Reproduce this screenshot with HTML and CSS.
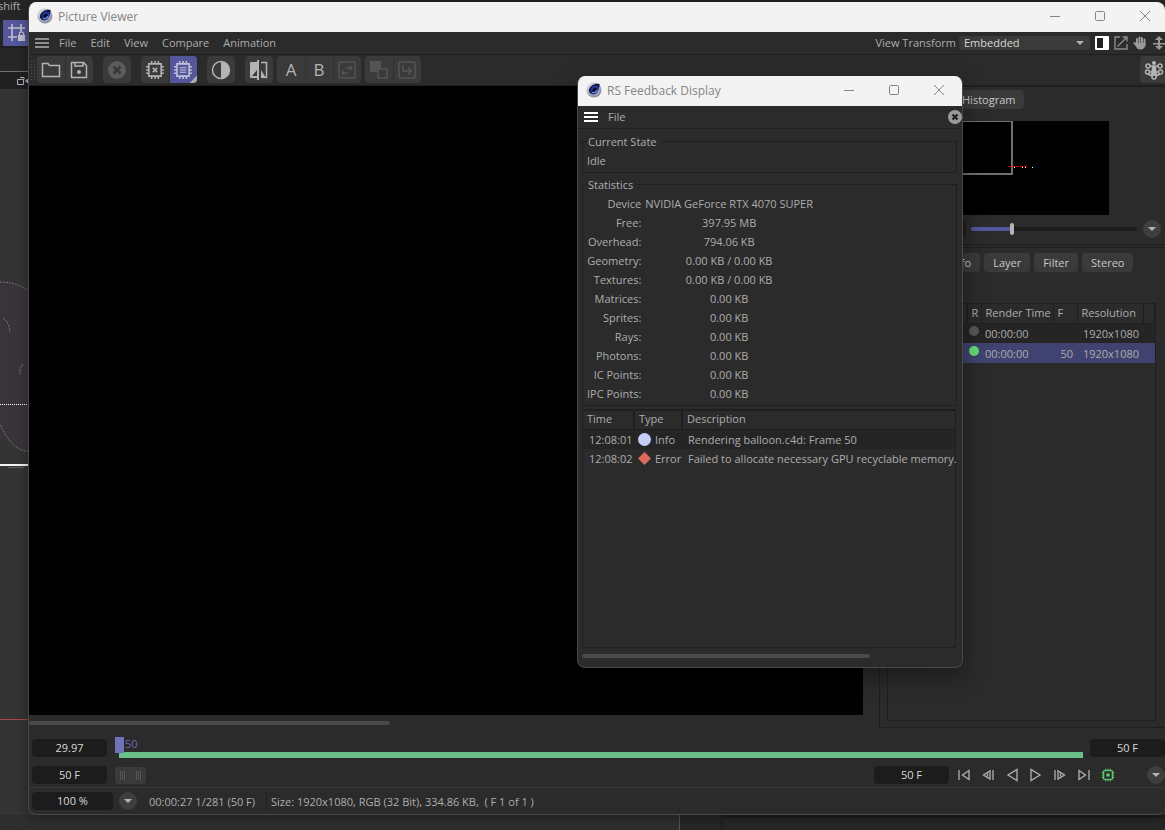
FILE: index.html
```
<!DOCTYPE html>
<html lang="en">

<head>
    <meta charset="UTF-8">
    <title>Picture Viewer</title>
    <link rel="stylesheet" href="styles.css">
</head>

<body>
    <!-- shared icons -->
    <svg class="defs" aria-hidden="true">
        <defs>
            <radialGradient id="ball" cx="40%" cy="35%" r="75%">
                <stop offset="0" stop-color="#ffffff" />
                <stop offset="1" stop-color="#77788c" />
            </radialGradient>
            <radialGradient id="lens" cx="60%" cy="60%" r="60%">
                <stop offset="0" stop-color="#6b8ce8" />
                <stop offset="0.5" stop-color="#26379c" />
                <stop offset="1" stop-color="#080c2c" />
            </radialGradient>
        </defs>
        <symbol id="logo" viewBox="0 0 16 16">
            <circle cx="8" cy="8" r="7.5" fill="url(#ball)" />
            <path d="M13.500 2C10 .8 4 3 3 7.500c-.6 3.500 2.500 5.500 5.500 4.700 3.500-1 5-4.700 5-10.200z" fill="url(#lens)" />
            <ellipse cx="8.600" cy="7.600" rx="2.600" ry="1.700" transform="rotate(-35 8.600 7.600)" fill="#050a24" />
            <path d="M6 10.500c2 .8 4-.2 5-2.500" stroke="#7f9bf0" fill="none" />
        </symbol>
        <symbol id="chip" viewBox="0 0 18 18">
            <path d="M3.500 3.500h11v11h-11zM6 1v2.500M9 1v2.500M12 1v2.500M6 14.500V17M9 14.500V17M12 14.500V17M1 6h2.500M1 9h2.500M1 12h2.500M14.500 6H17M14.500 9H17M14.500 12H17" fill="none" stroke="currentColor" stroke-width="1.400" />
        </symbol>
        <symbol id="min" viewBox="0 0 10 10"><path d="M0 5.500h10" stroke="currentColor" /></symbol>
        <symbol id="max" viewBox="0 0 10 10"><rect x=".5" y=".5" width="9" height="9" rx="1" fill="none" stroke="currentColor" /></symbol>
        <symbol id="close" viewBox="0 0 10 10"><path d="M0 0l10 10M10 0L0 10" stroke="currentColor" /></symbol>
        <symbol id="bars" viewBox="0 0 14 10"><path d="M0 1h14M0 5h14M0 9h14" stroke="currentColor" stroke-width="2" /></symbol>
    </svg>

    <!-- main application behind -->
    <div class="app">
        <div class="app-menu">shift</div>
        <div class="app-tools">
            <button class="snap" aria-label="Snap">
                <svg width="20" height="20" viewBox="0 0 20 20" fill="none" stroke="#bfc0cc" stroke-width="1.600">
                    <path d="M1 5h17M1 14h9M5 1v17M14 1v8" />
                    <rect x="11" y="12" width="7" height="6" fill="#bfc0cc" stroke="none" />
                    <path d="M12.500 12v-2q2-2 4 0v2" stroke-width="1.200" />
                </svg>
            </button>
        </div>
        <div class="app-row"></div>
        <div class="app-camera">
            <svg width="13" height="10" viewBox="0 0 13 10" fill="none" stroke="#aeb4c4">
                <path d="M.5 3.500h6v5h-6zM3 1.500h4v2" />
                <path d="M12 2.500v5L8.500 5z" fill="#aeb4c4" />
            </svg>
        </div>
        <div class="app-view">
            <svg width="29" height="741" viewBox="0 89 29 741">
                <path d="M0 282q16 0 29 9v160q-9 1-18-9-7-8-11-18z" fill="#393439" />
                <path d="M0 282q16 0 29 9M29 451q-9 1-18-9-7-8-11-18" fill="none" stroke="#757575" stroke-dasharray="2 1" />
                <path d="M3 318q6 4 7 14M23 364q-4 5-3 10" fill="none" stroke="#7c7c7c" stroke-dasharray="2 1" />
                <path d="M0 404.500h29" stroke="#fff" stroke-dasharray="1 1" />
                <path d="M0 465h29" stroke="#f4f4f4" stroke-width="2" />
                <path d="M8 467.500h16" stroke="#606060" />
                <path d="M0 719.500h29" stroke="#a34a4a" />
            </svg>
        </div>
        <div class="app-foot">
            <div class="foot-view"></div>
            <div class="foot-side"></div>
        </div>
    </div>

    <!-- picture viewer -->
    <main class="window viewer">
        <header class="titlebar">
            <svg class="logo"><use href="#logo" /></svg>
            <h1>Picture Viewer</h1>
            <div class="win-buttons">
                <button aria-label="Minimize"><svg><use href="#min" /></svg></button>
                <button aria-label="Maximize"><svg><use href="#max" /></svg></button>
                <button aria-label="Close"><svg><use href="#close" /></svg></button>
            </div>
        </header>

        <nav class="menubar">
            <button class="burger" aria-label="Menu"><svg><use href="#bars" /></svg></button>
            <button class="item">File</button>
            <button class="item">Edit</button>
            <button class="item">View</button>
            <button class="item">Compare</button>
            <button class="item">Animation</button>
            <div class="menu-right">
                <label for="transform">View Transform</label>
                <select id="transform">
                    <option>Embedded</option>
                </select>
                <button aria-label="Side panel">
                    <svg width="14" height="14" viewBox="0 0 14 14"><rect width="14" height="14" rx="1" fill="#fff" /><path d="M2 2h6v10H2z" fill="#222" /></svg>
                </button>
                <button aria-label="Open in window">
                    <svg width="14" height="14" viewBox="0 0 14 14" fill="none" stroke="#8c8c8c" stroke-width="1.400"><path d="M6 1H1v12h12V8M3.500 10.500L13 1M8.500 1H13v4.500" /></svg>
                </button>
                <button aria-label="Pan">
                    <svg width="14" height="14" viewBox="0 0 14 14" fill="none" stroke="#9a9a9a" stroke-width="2" stroke-linecap="round"><path d="M4 8V3M6.500 7V1.500M9 7V2M11.500 8V3.500M1.500 7L4 10" /><path d="M4 8h7.500v1.500q-1 3-4 3T4 9.500z" fill="#9a9a9a" /></svg>
                </button>
                <button aria-label="Zoom">
                    <svg width="14" height="14" viewBox="0 0 14 14" fill="#9a9a9a"><path d="M7 0l4 4H8v3h5v1.500H8V10h3l-4 4-4-4h3V8.500H1V7h5V4H3z" /></svg>
                </button>
            </div>
        </nav>

        <div class="toolbar">
            <span class="grip"></span>
            <div class="group">
                <button aria-label="Open"><svg viewBox="0 0 20 20"><path d="M1.500 16.500v-13h5.500l1.500 2h10v11z" /></svg></button>
                <button aria-label="Save"><svg viewBox="0 0 20 20"><path d="M2.500 2.500h12l3 3v12h-15zM6 3v3h8V3" /><circle cx="10" cy="12" r="2" class="fill" /></svg></button>
            </div>
            <div class="group">
                <button aria-label="Stop" disabled><svg viewBox="0 0 20 20"><circle cx="10" cy="10" r="9" fill="#5c5c5c" stroke="none" /><path d="M6.500 6.500l7 7M13.500 6.500l-7 7" stroke="#393939" stroke-width="3" /></svg></button>
            </div>
            <div class="group">
                <button aria-label="Clear cache"><svg viewBox="0 0 18 18"><use href="#chip" /><path d="M7 7l4 4M11 7l-4 4" /></svg></button>
                <button aria-label="Cache" class="on"><svg viewBox="0 0 18 18"><use href="#chip" /><path d="M6 7h6M6 9h6M6 11h6" stroke-width="1" /></svg></button>
            </div>
            <div class="group">
                <button aria-label="Contrast"><svg viewBox="0 0 20 20"><circle cx="10" cy="10" r="8.500" /><path d="M10 1.500a8.500 8.500 0 0 1 0 17z" class="fill" /></svg></button>
            </div>
            <div class="group tight">
                <button aria-label="Compare"><svg viewBox="0 0 20 20"><path d="M1 3q0-1 1-1h6V0h2v20H8v-2H2q-1 0-1-1zM8 10l-5 6h5z" fill-rule="evenodd" class="fill" /><path d="M12 2.500h5.500v15H16" /><path d="M12 10l5 8h-5z" class="fill" /></svg></button>
            </div>
            <div class="group tight">
                <button class="letter">A</button>
                <button class="letter">B</button>
                <button aria-label="Swap" disabled><svg viewBox="0 0 20 20"><rect x="2" y="2" width="16" height="16" rx="1" /><path d="M9 8h6M13 6l2 2-2 2M11 13H5M7 11l-2 2 2 2" /></svg></button>
            </div>
            <div class="group">
                <button aria-label="Layers" disabled><svg viewBox="0 0 20 20"><path d="M1 1h11v11H1z" class="fill" /><path d="M9 9h9v9H9z" fill="#3a3a3a" /></svg></button>
                <button aria-label="Send" disabled><svg viewBox="0 0 20 20"><rect x="2" y="2" width="16" height="16" rx="1" /><path d="M6 5v6h8M11 7.500l3.500 3.500-3.500 3.500" /></svg></button>
            </div>
            <div class="group last">
                <button aria-label="Simulation">
                    <svg viewBox="0 0 20 20"><path d="M8 6h4l1 9h-6z" class="fill" /><circle cx="10" cy="3" r="2" class="fill" /><circle cx="4" cy="6" r="2" /><circle cx="16" cy="6" r="2" /><circle cx="3.500" cy="12" r="2" /><circle cx="16.500" cy="12" r="2" /><circle cx="10" cy="17" r="2" /><path d="M6 6h8M5 12h10M8 16l-4-2M12 16l4-2" /></svg>
                </button>
            </div>
        </div>

        <div class="content">
            <section class="stage">
                <div class="canvas"></div>
                <div class="scroll"></div>
            </section>

            <aside class="side">
                <div class="tabs top-tabs">
                    <button>Histogram</button>
                </div>
                <div class="navigator">
                    <div class="frame"></div>
                    <svg class="marks" width="26" height="4" viewBox="0 0 26 4"><path d="M0 1.500h20" stroke="#e00000" stroke-dasharray="3 1" /><path d="M6 2.500h1M14 2.500h1M17 2.500h1M24 2.500h1" stroke="#fff" /></svg>
                </div>
                <div class="zoom-row">
                    <span class="zoom-value"></span>
                    <input type="range" min="0" max="100" value="24" aria-label="Zoom">
                    <button class="round" aria-label="Zoom presets"></button>
                </div>
                <div class="tabs info-tabs">
                    <button>Info</button>
                    <button>Layer</button>
                    <button>Filter</button>
                    <button>Stereo</button>
                </div>
                <div class="history">
                    <table>
                        <thead>
                            <tr>
                                <th class="c-name"></th>
                                <th class="c-r">R</th>
                                <th class="c-time">Render Time</th>
                                <th class="c-f">F</th>
                                <th class="c-res">Resolution</th>
                                <th></th>
                            </tr>
                        </thead>
                        <tbody>
                            <tr>
                                <td></td>
                                <td class="state"><i class="dot"></i></td>
                                <td>00:00:00</td>
                                <td class="num"></td>
                                <td class="num">1920x1080</td>
                                <td></td>
                            </tr>
                            <tr class="selected">
                                <td class="num">*</td>
                                <td class="state"><i class="dot green"></i></td>
                                <td>00:00:00</td>
                                <td class="num">50</td>
                                <td class="num">1920x1080</td>
                                <td></td>
                            </tr>
                        </tbody>
                    </table>
                </div>
            </aside>
        </div>

        <section class="timeline">
            <div class="line">
                <input class="field" value="29.97" aria-label="Frame rate">
                <div class="ruler">
                    <div class="track"></div>
                    <div class="playhead"></div>
                    <span class="frame-no">50</span>
                </div>
                <input class="field" value="50 F" aria-label="Last frame">
            </div>
            <div class="line">
                <input class="field" value="50 F" aria-label="First frame">
                <div class="range"><i></i><i></i></div>
                <input class="field push" value="50 F" aria-label="Current frame">
                <div class="transport">
                    <button aria-label="First"><svg viewBox="0 0 14 14"><path d="M2 2v10M12 2.500v9L5.500 7z" /></svg></button>
                    <button aria-label="Previous frame"><svg viewBox="0 0 14 14"><path d="M12 2v10M9 3v8L2.500 7zM6.500 5.500v3" /></svg></button>
                    <button aria-label="Play backwards"><svg viewBox="0 0 14 14"><path d="M12 1.500v11L3 7z" /></svg></button>
                    <button aria-label="Play"><svg viewBox="0 0 14 14"><path d="M2 1.500v11L11 7z" /></svg></button>
                    <button aria-label="Next frame"><svg viewBox="0 0 14 14"><path d="M2 2v10M5 3v8l6.500-4zM7.500 5.500v3" /></svg></button>
                    <button aria-label="Last"><svg viewBox="0 0 14 14"><path d="M12 2v10M2 2.500v9L8.500 7z" /></svg></button>
                    <button aria-label="RAM player" class="ram"><svg viewBox="0 0 18 18"><use href="#chip" /><path d="M7 7h4v4H7z" class="fill" /></svg></button>
                </div>
                <button class="round" aria-label="Options"></button>
            </div>
        </section>

        <footer class="status">
            <input class="field wide" value="100 %" aria-label="Zoom factor">
            <button class="round" aria-label="Zoom list"></button>
            <span class="time">00:00:27 1/281 (50 F)</span>
            <span class="size">Size: 1920x1080, RGB (32 Bit), 334.86 KB,&nbsp; ( F 1 of 1 )</span>
        </footer>
    </main>

    <!-- redshift feedback -->
    <section class="window feedback">
        <header class="titlebar">
            <svg class="logo"><use href="#logo" /></svg>
            <h2>RS Feedback Display</h2>
            <div class="win-buttons">
                <button aria-label="Minimize"><svg><use href="#min" /></svg></button>
                <button aria-label="Maximize"><svg><use href="#max" /></svg></button>
                <button aria-label="Close"><svg><use href="#close" /></svg></button>
            </div>
        </header>
        <nav class="menubar">
            <button class="burger" aria-label="Menu"><svg><use href="#bars" /></svg></button>
            <button class="item">File</button>
            <button class="cancel" aria-label="Cancel">
                <svg width="14" height="14" viewBox="0 0 14 14"><circle cx="7" cy="7" r="7" fill="#999" /><path d="M4.500 4.500l5 5M9.500 4.500l-5 5" stroke="#222" stroke-width="2.400" /></svg>
            </button>
        </nav>
        <div class="panel">
            <fieldset>
                <legend>Current State</legend>
                <p>Idle</p>
            </fieldset>
            <fieldset class="stats">
                <legend>Statistics</legend>
                <table>
                    <tr><th>Device</th><td>NVIDIA GeForce RTX 4070 SUPER</td></tr>
                    <tr><th>Free:</th><td>397.95 MB</td></tr>
                    <tr><th>Overhead:</th><td>794.06 KB</td></tr>
                    <tr><th>Geometry:</th><td>0.00 KB / 0.00 KB</td></tr>
                    <tr><th>Textures:</th><td>0.00 KB / 0.00 KB</td></tr>
                    <tr><th>Matrices:</th><td>0.00 KB</td></tr>
                    <tr><th>Sprites:</th><td>0.00 KB</td></tr>
                    <tr><th>Rays:</th><td>0.00 KB</td></tr>
                    <tr><th>Photons:</th><td>0.00 KB</td></tr>
                    <tr><th>IC Points:</th><td>0.00 KB</td></tr>
                    <tr><th>IPC Points:</th><td>0.00 KB</td></tr>
                </table>
            </fieldset>
            <div class="log">
                <table>
                    <thead>
                        <tr><th class="l-time">Time</th><th class="l-type">Type</th><th>Description</th></tr>
                    </thead>
                    <tbody>
                        <tr class="odd">
                            <td>12:08:01</td>
                            <td class="type"><i class="info-dot"></i>Info</td>
                            <td>Rendering balloon.c4d: Frame 50</td>
                        </tr>
                        <tr>
                            <td>12:08:02</td>
                            <td class="type"><i class="error-dot"></i>Error</td>
                            <td>Failed to allocate necessary GPU recyclable memory.</td>
                        </tr>
                    </tbody>
                </table>
            </div>
            <div class="scroll"></div>
        </div>
    </section>
</body>

</html>
```
FILE: styles.css
```
* {
    box-sizing: border-box;
}

body {
    margin: 0;
    height: 100vh;
    min-height: 700px;
    position: relative;
    overflow: hidden;
    background: #262626;
    color: #adadad;
    font: 11px/19px "Open Sans", "Noto Sans CJK KR", sans-serif;
}

button,
input,
select {
    font: inherit;
    color: inherit;
    border: 0;
    margin: 0;
    padding: 0;
    background: none;
}

button {
    display: flex;
    align-items: center;
    justify-content: center;
}

table {
    border-collapse: collapse;
    table-layout: fixed;
    width: 100%;
}

th,
td {
    padding: 0;
    font-weight: normal;
    text-align: left;
    white-space: nowrap;
}

h1,
h2,
p {
    margin: 0;
    font-size: 12px;
    font-weight: normal;
}

.defs {
    position: absolute;
    width: 0;
    height: 0;
}

/* application behind the windows */
.app {
    height: 100%;
    display: flex;
    flex-direction: column;
}

.app-menu {
    height: 18px;
    line-height: 12px;
    text-indent: -2px;
}

.app-tools {
    height: 30px;
    padding: 2px 0 0 3px;
    border-bottom: 2px solid #1f1f1f;
}

.snap {
    width: 28px;
    height: 26px;
    background: #54579b;
}

.app-row {
    height: 24px;
    border-bottom: 1px solid #707070;
}

.app-camera {
    height: 17px;
    padding: 4px 0 0 17px;
    background: #202020;
}

.app-camera svg,
.app-view svg {
    display: block;
}

.app-view {
    flex: 1;
    min-height: 0;
    overflow: hidden;
    background: #343434;
}

.app-foot {
    height: 15px;
    display: flex;
}

.foot-view {
    width: 680px;
    background: #2e2e2e;
    border-right: 1px solid #555;
}

.foot-side {
    flex: 1;
    margin-left: 41px;
    border-left: 1px solid #1a1a1a;
    border-top: 3px solid #1e1e1e;
}

/* windows */
.window {
    position: absolute;
    display: flex;
    flex-direction: column;
    overflow: hidden;
    border-radius: 8px;
    background: #2b2b2b;
}

.viewer {
    left: 28px;
    top: 2px;
    right: 0;
    bottom: 15px;
    border: solid #4a4a4a;
    border-width: 0 0 1px 1px;
    box-shadow: 0 2px 12px rgba(0, 0, 0, 0.4);
}

.feedback {
    left: 577px;
    top: 76px;
    width: 386px;
    height: 592px;
    border: solid #4a4a4a;
    border-width: 0 1px 1px;
    box-shadow: 0 8px 24px rgba(0, 0, 0, 0.4);
}

.titlebar {
    flex: none;
    height: 30px;
    padding: 0 0 2px 8px;
    display: flex;
    align-items: center;
    gap: 5px;
    background: #f3f3f3;
    color: #858585;
}

.logo {
    width: 16px;
    height: 16px;
}

.win-buttons {
    margin-left: auto;
    display: flex;
}

.win-buttons button {
    width: 45px;
    height: 28px;
}

.viewer .win-buttons {
    margin-right: -2px;
}

.feedback .win-buttons {
    margin-right: 1px;
}

.win-buttons svg {
    width: 10px;
    height: 10px;
}

.menubar {
    flex: none;
    height: 23px;
    padding-left: 6px;
    display: flex;
    align-items: center;
    gap: 14px;
    border-bottom: 1px solid #1f1f1f;
}

.burger {
    margin-right: -4px;
    color: #8f8f8f;
}

.burger svg {
    width: 14px;
    height: 10px;
}

.item,
.menu-right label {
    padding-bottom: 2px;
}

.menu-right {
    margin-left: auto;
    display: flex;
    align-items: center;
    gap: 5px;
    margin-right: -1px;
}

.menu-right label {
    margin-right: -2px;
}

.menu-right select {
    width: 131px;
    height: 14px;
    padding-left: 5px;
    line-height: 14px;
    appearance: none;
    border-radius: 3px;
    color: #d8d8d8;
    background: #3a3a3a url("data:image/svg+xml,%3Csvg xmlns='http://www.w3.org/2000/svg' width='8' height='4'%3E%3Cpath d='M0 0h8L4 4z' fill='%23b0b0b0'/%3E%3C/svg%3E") no-repeat right 6px center;
}

/* toolbar */
.toolbar {
    flex: none;
    height: 31px;
    padding: 0 0 1px 1px;
    display: flex;
    align-items: center;
    gap: 4px;
    border-bottom: 1px solid #1f1f1f;
}

.grip {
    width: 6px;
    height: 20px;
    margin-right: -3px;
    background: radial-gradient(#555 1px, transparent 1px) 0 0 / 3px 3px;
}

.group {
    display: flex;
    margin-right: 6px;
    border-radius: 4px;
    overflow: hidden;
    background: #3a3a3a;
}

.group.tight {
    margin-right: 0;
}

.group button {
    width: 28px;
    height: 27px;
    color: #b4b4b4;
}

.group button + button {
    box-shadow: inset 1px 0 #313131;
}

.group button:disabled {
    color: #545454;
}

.group svg {
    width: 20px;
    height: 20px;
    fill: none;
    stroke: currentColor;
    stroke-width: 1.5px;
}

.group .fill,
.transport .fill {
    fill: currentColor;
    stroke: none;
}

.group .letter {
    font-size: 17px;
}

.group .on {
    color: #c0c1d8;
    background: linear-gradient(135deg, transparent 87%, #aaa 87%) #54579b;
}

.group.last {
    margin: 0 -3px 0 auto;
}

/* picture and side panel */
.content {
    flex: 1;
    min-height: 0;
    display: flex;
}

.stage {
    flex: 1;
    display: flex;
    flex-direction: column;
    gap: 6px;
}

.canvas {
    flex: 1;
    background: #000;
}

.scroll {
    width: 361px;
    height: 4px;
    border-radius: 2px;
    background: #4a4a4a;
}

.stage .scroll {
    margin-bottom: 3px;
}

.side {
    width: 286px;
    margin-left: 16px;
    display: flex;
    flex-direction: column;
    border: solid #1f1f1f;
    border-width: 1px 0 1px 1px;
}

.tabs {
    display: flex;
    gap: 4px;
}

.tabs button {
    height: 19px;
    padding: 0 9px;
    border-radius: 4px;
    background: #3a3a3a;
    color: #c8c8c8;
}

.top-tabs {
    padding: 3px 0 12px 73px;
}

.navigator {
    height: 94px;
    width: 220px;
    margin-left: 9px;
    position: relative;
    background: #000;
}

.frame {
    width: 124px;
    height: 54px;
    border: 2px solid #707070;
    border-width: 1px 2px 2px 1px;
}

.marks {
    position: absolute;
    left: 119px;
    top: 44px;
}

.zoom-row {
    height: 30px;
    padding: 2px 4px 3px 8px;
    display: flex;
    align-items: center;
    border-bottom: 1px solid #1f1f1f;
}

.zoom-value {
    width: 78px;
    height: 18px;
    border-radius: 4px;
    background: #1d1d1d;
}

.zoom-row input {
    flex: 1;
    height: 12px;
    margin: 0 6px 0 5px;
    appearance: none;
}

.zoom-row input::-webkit-slider-runnable-track {
    height: 4px;
    border-radius: 2px;
    background: linear-gradient(90deg, #54579b 24%, #1d1d1d 24%);
}

.zoom-row input::-webkit-slider-thumb {
    appearance: none;
    width: 4px;
    height: 12px;
    margin-top: -4px;
    border-radius: 2px;
    background: #b4b4b4;
}

.round {
    flex: none;
    width: 18px;
    height: 18px;
    border-radius: 50%;
    background: #3e3e3e;
}

.round::after {
    content: "";
    border: 4px solid transparent;
    border-top-color: #b4b4b4;
    border-bottom: 0;
}

.info-tabs {
    margin-top: 2px;
    padding: 5px 0 31px 62px;
    border-top: 1px solid #1f1f1f;
}

.history {
    flex: 1;
    margin: 0 9px 6px 7px;
    border: 1px solid #1f1f1f;
}

.history th {
    height: 19px;
    line-height: 18px;
    padding-left: 4px;
    border-right: 1px solid #1f1f1f;
    border-bottom: 1px solid #1f1f1f;
}

.history td {
    height: 20px;
    padding-left: 4px;
    background: #252525;
}

.history .selected td {
    background: #40436f;
}

.history .num {
    padding: 0 4px 0 0;
    text-align: right;
}

.history td.state {
    padding: 0;
}

.c-name {
    width: 79px;
}

.c-r {
    width: 14px;
}

.c-time {
    width: 72px;
}

.c-f {
    width: 24px;
}

.c-res {
    width: 66px;
}

.dot {
    display: block;
    width: 10px;
    height: 10px;
    margin: 0 auto 4px;
    border-radius: 50%;
    background: #575757;
}

.green {
    background: #66dd77;
}

/* timeline */
.timeline {
    flex: none;
    height: 60px;
    padding: 11px 0 0 3px;
    border-bottom: 1px solid #383838;
}

.line {
    display: flex;
    align-items: center;
    height: 18px;
    margin-bottom: 9px;
}

.field {
    flex: none;
    width: 75px;
    height: 18px;
    padding-bottom: 2px;
    border-radius: 4px;
    text-align: center;
    background: #1c1c1c;
    color: #d8d8d8;
}

.ruler {
    flex: 1;
    height: 24px;
    margin: 0 7px 0 8px;
    position: relative;
}

.track {
    height: 6px;
    margin: 16px 0 0 4px;
    background: #6bbf8b;
}

.playhead {
    position: absolute;
    left: 0;
    top: 1px;
    width: 9px;
    height: 16px;
    background: #7073b8;
}

.frame-no {
    position: absolute;
    left: 10px;
    top: 0;
    line-height: 16px;
    color: #6568ae;
}

.range {
    width: 31px;
    height: 17px;
    margin-left: 8px;
    padding: 4px 5px;
    display: flex;
    justify-content: space-between;
    border-radius: 3px;
    background: #3a3a3a;
}

.range i {
    width: 5px;
    background: repeating-linear-gradient(90deg, #555 0 1px, transparent 1px 2px);
}

.push {
    margin-left: auto;
}

.transport {
    display: flex;
    gap: 10px;
    margin: 0 32px 0 8px;
}

.transport svg {
    width: 14px;
    height: 14px;
    fill: none;
    stroke: #b0b0b0;
    stroke-width: 1.3px;
}

.transport .ram {
    color: #5fd873;
}

.transport .ram svg {
    stroke: none;
}

.status {
    flex: none;
    height: 26px;
    padding-left: 3px;
    display: flex;
    align-items: center;
}

.wide {
    width: 81px;
}

.status .round {
    margin: 0 12px 0 6px;
}

.size {
    margin-left: 11px;
    padding-left: 4px;
    border-left: 1px solid #1f1f1f;
}

/* feedback window */
.feedback .burger {
    color: #fff;
}

.cancel {
    margin-left: auto;
}

.panel {
    flex: 1;
    min-height: 0;
    padding: 3px 5px 9px 4px;
    display: flex;
    flex-direction: column;
}

.panel .scroll {
    width: 288px;
    margin-top: 6px;
}

fieldset {
    margin: 0 0 2px;
    padding: 0 4px 2px;
    border: 1px solid #1f1f1f;
}

legend {
    padding: 0 5px 0 1px;
}

fieldset p {
    font-size: 11px;
}

.stats {
    margin-bottom: 3px;
}

.stats th {
    text-align: right;
}

.stats td {
    padding-left: 4px;
}

.stats table {
    table-layout: auto;
    width: auto;
}

.stats tr + tr td {
    text-align: center;
}

.log {
    flex: 1;
    margin-right: 1px;
    border: 1px solid #1f1f1f;
    border-top-width: 2px;
}

.log th {
    height: 18px;
    padding-left: 4px;
    line-height: 16px;
    vertical-align: top;
    border-right: 2px solid #1f1f1f;
    border-bottom: 1px solid #1f1f1f;
}

.log th:last-child {
    border-right: 0;
}

.log td {
    height: 19px;
    padding-left: 6px;
}

.log td.type {
    padding-left: 4px;
}

.odd {
    background: #252525;
}

.l-time {
    width: 51px;
}

.l-type {
    width: 48px;
}

.info-dot,
.error-dot {
    display: inline-block;
    vertical-align: middle;
    width: 13px;
    height: 13px;
    margin: 0 4px 2px 0;
}

.info-dot {
    border-radius: 50%;
    background: #c3cff5;
}

.error-dot {
    background: #de6a5e;
    clip-path: polygon(50% 0, 100% 50%, 50% 100%, 0 50%);
}
```
